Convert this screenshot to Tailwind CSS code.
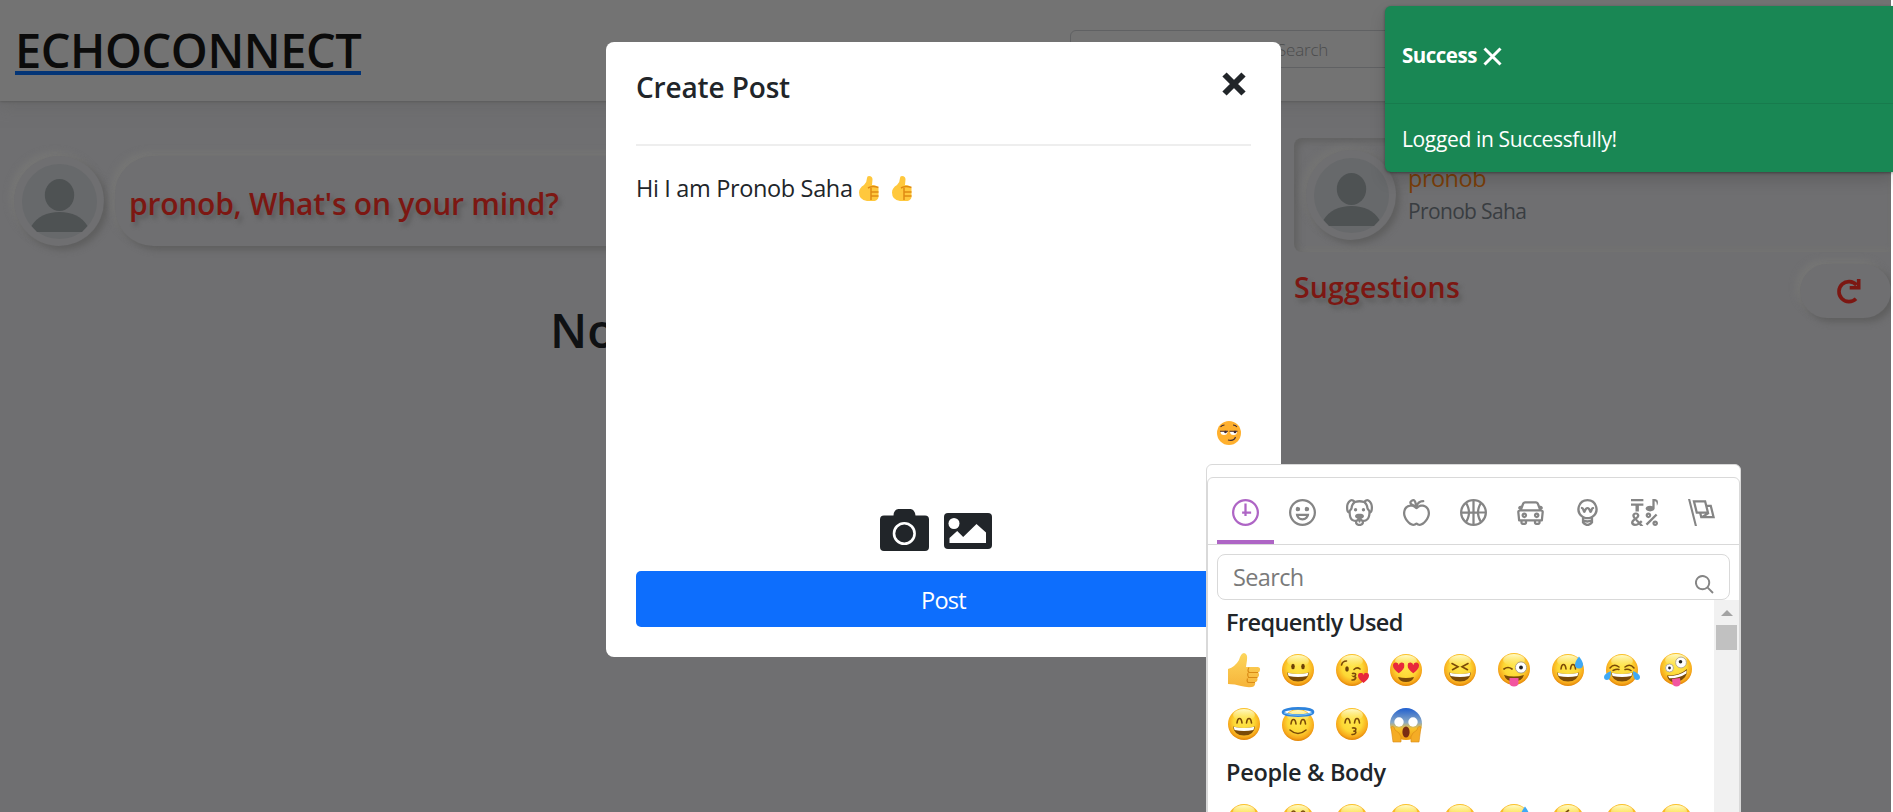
<!DOCTYPE html>
<html lang="en">
<head>
<meta charset="utf-8">
<title>EchoConnect</title>
<script src="https://cdn.jsdelivr.net/npm/@tailwindcss/browser@4"></script>
</head>
<body class="relative h-[812px] w-[1893px] overflow-hidden bg-white font-['Open_Sans','Noto_Sans',sans-serif] text-[#212529]">

<!-- shared shapes -->
<svg class="absolute size-0">
  <defs>
    <radialGradient id="face" cx=".5" cy=".42" r=".58">
      <stop offset="0" stop-color="#ffe64a"/><stop offset=".55" stop-color="#fdd835"/><stop offset=".85" stop-color="#f7a91c"/><stop offset="1" stop-color="#e08305"/>
    </radialGradient>
    <linearGradient id="shine" x1="0" y1="0" x2="0" y2="1"><stop offset="0" stop-color="#fffbc8"/><stop offset="1" stop-color="#fff59d" stop-opacity="0"/></linearGradient>
    <linearGradient id="scare" x1="0" y1="0" x2="0" y2="1"><stop offset="0" stop-color="#1f5fd0"/><stop offset=".45" stop-color="#8aa9c4"/><stop offset=".65" stop-color="#f9c22b"/><stop offset="1" stop-color="#ee9a10"/></linearGradient>
    <linearGradient id="thumb" x1="0" y1="0" x2="0" y2="1"><stop offset="0" stop-color="#fdd65c"/><stop offset="1" stop-color="#f6b43a"/></linearGradient>
    <symbol id="ball" viewBox="0 0 34 34"><circle cx="17" cy="17" r="16" fill="url(#face)"/><ellipse cx="17" cy="8" rx="11" ry="6" fill="url(#shine)"/></symbol>
    <symbol id="grin" viewBox="0 0 34 34"><path d="M6 19.5q11 3 22 0q-1 9-11 9t-11-9z" fill="#7a4a08"/><path d="M6.6 19.7q10.400 2.500 20.800 0l-1 3.300q-9.400 1.800-18.800 0z" fill="#fff"/></symbol>
    <symbol id="arcs" viewBox="0 0 34 34"><path d="M10 16q.5-4.500 2.500-4.500t2.500 4.500M19.500 16q.5-4.500 2.500-4.500t2.500 4.500" fill="none" stroke="#7a4a08" stroke-width="1.600" stroke-linecap="round"/></symbol>
    <symbol id="heart" viewBox="0 0 12 11"><path d="M6 11Q0 6.500 0 3.200A3 3 0 0 1 6 2.500A3 3 0 0 1 12 3.200Q12 6.500 6 11z" fill="#e8293b"/></symbol>
    <symbol id="drop" viewBox="0 0 8 12"><path d="M4 0Q8 5 8 8a4 4 0 0 1-8 0Q0 5 4 0z" fill="#3fa9f5"/></symbol>

    <symbol id="e-thumb" viewBox="0 0 34 36"><path d="M1 17q7-2 11-9Q14 1 17 1q4 1 3 7l-1 7h12q2.500.5 2 3t-2 2.500q1.500 1 1 3t-2 2q1 1.500.3 3t-2.300 1.700q.6 1.600-.3 3T25 35q-6 .5-11-1Q8 32 1 32z" fill="url(#thumb)"/><path d="M31 20.500h-9q-2-2 0-5M30.500 25.500h-9q-1.500-2-.5-4.500M28 30.500h-7q-1.500-2-.5-4" fill="none" stroke="#d98a16" stroke-width="1.200"/></symbol>
    <symbol id="e-grin" viewBox="0 0 34 34"><use href="#ball"/><ellipse cx="12" cy="13.500" rx="1.800" ry="2.700" fill="#6b4008"/><ellipse cx="22" cy="13.500" rx="1.800" ry="2.700" fill="#6b4008"/><use href="#grin"/></symbol>
    <symbol id="e-kissheart" viewBox="0 0 34 34"><use href="#ball"/><ellipse cx="12" cy="16" rx="1.800" ry="2.800" fill="#6b4008"/><path d="M6.500 12q1-4 5-4M19 16.500q3-3 6-.5M17.500 20.500q4-.5 3 1.700t-2 1.300q3 .3 2 2t-3.500 1.500" fill="none" stroke="#7a4a08" stroke-width="1.600" stroke-linecap="round"/><use href="#heart" x="23" y="20" width="11" height="10"/></symbol>
    <symbol id="e-hearteyes" viewBox="0 0 34 34"><use href="#ball"/><use href="#heart" x="4" y="9" width="11.500" height="12"/><use href="#heart" x="18.500" y="9" width="11.500" height="12"/><path d="M9 24q8 2 16 0-1.500 5-8 5t-8-5z" fill="#7a4a08"/></symbol>
    <symbol id="e-squint" viewBox="0 0 34 34"><use href="#ball"/><path d="M9 10.500l6 3.200-5.500 3M25 10.500l-6 3.200 5.500 3" fill="none" stroke="#7a4a08" stroke-width="1.600" stroke-linecap="round"/><use href="#grin"/></symbol>
    <symbol id="e-wink" viewBox="0 0 34 36"><use href="#ball" width="34" height="34"/><path d="M7 17q4-3 8 0" fill="none" stroke="#7a4a08" stroke-width="1.700" stroke-linecap="round"/><circle cx="24" cy="15.500" r="5.600" fill="#fff" stroke="#9a8f80" stroke-width=".8"/><circle cx="24" cy="15.500" r="1.900" fill="#222"/><path d="M7 23q10 3 20 0-2 6.500-10 6.500T7 23z" fill="#7a4a08"/><path d="M12.500 26h9v5q-.5 3.500-4.500 3.500t-4.500-3.500z" fill="#f255a0"/></symbol>
    <symbol id="e-sweat" viewBox="0 0 34 34"><use href="#ball"/><use href="#arcs"/><use href="#grin"/><use href="#drop" x="24" y="3" width="8" height="13"/></symbol>
    <symbol id="e-joy" viewBox="0 0 36 34"><use href="#ball" x="1" width="34" height="34"/><path d="M6 15q4-5 9-1M21 14q5-4 9 1M9 17.500q4-2 6-1M21 16.500q3-1 6 1" fill="none" stroke="#7a4a08" stroke-width="1.500" stroke-linecap="round"/><use href="#grin" x="1" width="34" height="34"/><path d="M7 18q0 9-4 9a3 3 0 0 1-3-3q0-3 7-6zM29 18q0 9 4 9a3 3 0 0 0 3-3q0-3-7-6z" fill="#3fa9f5"/></symbol>
    <symbol id="e-zany" viewBox="0 0 34 36"><use href="#ball" width="34" height="34"/><circle cx="22" cy="10.500" r="5.400" fill="#fff" stroke="#a99c86" stroke-width=".8"/><circle cx="21.500" cy="9.800" r="1.800" fill="#222"/><circle cx="10.500" cy="16" r="4" fill="#fff" stroke="#a99c86" stroke-width=".8"/><circle cx="10.500" cy="16" r="1.400" fill="#222"/><path d="M8 23.500q12 .5 20-6.500.5 10-9 12.500T8 23.500z" fill="#7a4a08"/><path d="M9 24q11 0 18.600-5.500l-.3 3q-7.300 5-17 4.700z" fill="#fff"/><path d="M13 27l8-1 .5 5q-.5 3.500-4 3.500t-4-3z" fill="#f255a0"/></symbol>
    <symbol id="e-smile" viewBox="0 0 34 34"><use href="#ball"/><use href="#arcs"/><use href="#grin"/></symbol>
    <symbol id="e-halo" viewBox="0 0 34 36"><use href="#ball" y="2" width="34" height="34"/><ellipse cx="17" cy="6" rx="15" ry="3.600" fill="none" stroke="#2d83dd" stroke-width="2.600"/><path d="M3 7q14 4.500 28 0" fill="none" stroke="#7ec4f5" stroke-width="1.200"/><path d="M10 18q.5-4.500 2.500-4.500t2.500 4.500M19.500 18q.5-4.500 2.500-4.500t2.500 4.500M9 24q8 7 16 0" fill="none" stroke="#7a4a08" stroke-width="1.600" stroke-linecap="round"/></symbol>
    <symbol id="e-kiss" viewBox="0 0 34 34"><use href="#ball"/><use href="#arcs"/><path d="M17.500 21q4-.5 3.300 1.700t-2.300 1.300q3 .3 2.200 2T17 27.500" fill="none" stroke="#7a4a08" stroke-width="1.600" stroke-linecap="round"/></symbol>
    <symbol id="e-scream" viewBox="0 0 34 36"><circle cx="17" cy="17" r="16" fill="url(#scare)"/><circle cx="10" cy="15" r="4.700" fill="#fff"/><circle cx="24" cy="15" r="4.700" fill="#fff"/><ellipse cx="17" cy="25" rx="3.600" ry="5.500" fill="#7a2c12"/><path d="M2 20q3-2 4 3l4 3q3 3 2 9H4q-1-7-2-15zM32 20q-3-2-4 3l-4 3q-3 3-2 9h8q1-7 2-15z" fill="#f5ac25" stroke="#d98a16" stroke-width=".6"/></symbol>
    <symbol id="e-flatthumb" viewBox="0 0 20 25"><path d="M10 0q3.500 0 3.500 3.500L13 9q6 0 6.500 3.500V21q-.5 3-4 4H8Q0 24 0 16.500 0 12 5 9 8 6 8 2q0-2 2-2z" fill="#ffc83d"/><path d="M9 12q4-2.500 10.500-.5M12 11.800V24M12.500 16h7M12.500 20h7" fill="none" stroke="#e08b13" stroke-width="1.500"/></symbol>
    <symbol id="avatar" viewBox="0 0 75 75"><circle cx="37.500" cy="37.500" r="37.500" fill="#67696b"/><ellipse cx="37.500" cy="31" rx="14.700" ry="16" fill="#4e5253"/><path d="M9.500 62Q18 48 37.500 48T65.500 62L60 68H15z" fill="#4e5253"/></symbol>
  </defs>
</svg>

<!-- dimmed page -->
<div class="flex h-full w-[1891px] flex-col overflow-hidden bg-[#6f6f71]">
  <header class="flex h-[101px] shrink-0 justify-between bg-[#737373] pl-[15px] shadow-[0_1px_2px_#5c5c5c,0_6px_14px_#65656599]">
    <a class="mt-[20px] h-[55px] w-[346px] border-b-4 border-[#033577] text-[47px] leading-[60px] font-semibold tracking-[-0.450px] whitespace-nowrap text-[#0b0b0b]">ECHOCONNECT</a>
    <div class="mt-[30px] mr-[321px] flex h-[38px] w-[500px] rounded-md border border-[#606163] pl-[206px]">
      <span class="text-[17px] leading-[37px] font-light tracking-[-0.2px] text-[#4b4c4d]">Search</span>
    </div>
  </header>
  <main class="flex flex-1 justify-between">
    <section class="w-[1270px] pt-[55px] pl-[14px]">
      <div class="flex gap-[11px]">
        <div class="flex size-[90px] items-center justify-center rounded-full shadow-[4px_4px_6px_#5f5f5f,-4px_-4px_6px_#767675]"><svg class="size-[75px]"><use href="#avatar"/></svg></div>
        <div class="h-[90px] flex-1 rounded-[38px] pl-[14px] shadow-[4px_4px_6px_#5f5f5f,-4px_-4px_6px_#767675]">
          <p class="text-[30px] leading-[95px] font-semibold tracking-[-0.230px] whitespace-nowrap text-[#7c1712] [text-shadow:3px_4px_4px_#5c5c5c]">pronob, What's on your mind?</p>
        </div>
      </div>
      <h1 class="mt-[54px] pl-[536px] text-[47.500px] leading-[60px] font-semibold text-[#0f1113]">No</h1>
    </section>
    <aside class="w-[597px] pt-[37px]">
      <div class="flex h-[114px] items-center gap-[12px] rounded-l-lg pl-[12px] shadow-[inset_4px_4px_6px_#626262,inset_0_-3px_5px_#747473]">
        <div class="flex size-[90px] items-center justify-center rounded-full shadow-[4px_4px_6px_#5f5f5f,-4px_-4px_6px_#747473]"><svg class="size-[75px]"><use href="#avatar"/></svg></div>
        <div>
          <p class="text-[23.500px] leading-[33px] tracking-[-0.5px] text-[#7a3e09]">pronob</p>
          <p class="text-[21px] leading-[33px] tracking-[-0.65px] text-[#393d41]">Pronob Saha</p>
        </div>
      </div>
      <div class="flex justify-between pt-[12px]">
        <h2 class="text-[28.500px] leading-[46px] font-semibold tracking-[0.15px] text-[#7c1712] [text-shadow:3px_4px_4px_#5c5c5c]">Suggestions</h2>
        <div class="flex h-[54px] w-[91px] items-center rounded-[27px] pl-[36px] shadow-[4px_4px_6px_#5f5f5f,-4px_-4px_6px_#767675]">
          <svg class="size-[26px]" viewBox="0 0 26 26" fill="none" stroke="#7c1712" stroke-width="3.600"><path d="M20 20.700A10 10 0 1 1 20.500 7"/><path d="M22.700 1v8.700h-9" /></svg>
        </div>
      </div>
    </aside>
  </main>
</div>

<!-- create post dialog -->
<div class="absolute top-[42px] left-[606px] flex h-[615px] w-[675px] flex-col rounded-lg bg-white px-[30px]">
  <div class="flex h-[104px] justify-between border-b-2 border-[#eee] pt-[26px] pr-[5px]">
    <h3 class="text-[28px] leading-[39px] font-semibold tracking-[-0.15px]">Create Post</h3>
    <svg class="mt-[4px] size-[24px]" viewBox="0 0 24 24"><path d="M2.500 2.500l19 19M21.500 2.500l-19 19" stroke="#212529" stroke-width="6"/></svg>
  </div>
  <div class="flex pt-[25px]">
    <p class="w-[223px] text-[23.500px] leading-[34px] tracking-[-0.350px] whitespace-nowrap">Hi I am Pronob Saha</p>
    <svg class="mt-[5px] h-[25px] w-[20px]"><use href="#e-flatthumb"/></svg>
    <svg class="mt-[5px] ml-[13px] h-[25px] w-[20px]"><use href="#e-flatthumb"/></svg>
  </div>
  <div class="mt-[216px] flex justify-end pr-[10px]">
    <svg class="size-[24px]" viewBox="0 0 24 24"><circle cx="12" cy="12" r="12" fill="#ffb02e"/><path d="M3.500 10.500h7q0 3.500-3.500 3.500t-3.500-3.500zM13 10.500h7q0 3.500-3.500 3.500t-3.500-3.500z" fill="#fff"/><path d="M3 10.200h8M12.500 10.200h8M3.500 6q1.500-2 4-2M16 4q2.500 0 4 2M11 19q6 1.500 7.500-3" fill="none" stroke="#402a32" stroke-width="1.100"/><circle cx="8.500" cy="11" r="1.300" fill="#402a32"/><circle cx="18" cy="11" r="1.300" fill="#402a32"/></svg>
  </div>
  <div class="mt-[64px] flex h-[43px] items-center justify-center gap-[15px] pr-[15px]">
    <svg class="h-[43px] w-[49px]" viewBox="0 0 49 43"><path d="M4 6.500h9.500q.5-6.500 5-6.500h12q4 0 5 6.500H45q4 0 4 4V38q0 4-4 4H4q-4 0-4-4V10.500q0-4 4-4z" fill="#212529"/><circle cx="24.300" cy="24.500" r="10.300" fill="none" stroke="#fff" stroke-width="2.600"/></svg>
    <svg class="h-[36px] w-[48px]" viewBox="0 0 48 36"><rect width="48" height="36" rx="4" fill="#212529"/><circle cx="10" cy="10.500" r="5.500" fill="#fff"/><path d="M5.500 30v-5l7.700-7 6 6L32.500 11l9.500 8.500V30z" fill="#fff"/></svg>
  </div>
  <button class="mt-[19px] h-[56px] rounded-[5px] bg-[#0d6efd] text-[23.500px] leading-[58px] tracking-[-0.7px] text-white">Post</button>
</div>

<!-- toast -->
<div class="absolute top-[6px] left-[1385px] h-[166px] w-[508px] rounded-l-md bg-[#198754] text-white shadow-[0_8px_16px_#00000026,0_1px_3px_#00000060]">
  <div class="flex h-[98px] items-center gap-[5px] border-b border-[#177b4d] pl-[17px]">
    <span class="w-[76px] text-[20.500px] leading-[30px] font-bold tracking-[-0.5px]">Success</span>
    <svg class="mt-[4px] size-[19px]" viewBox="0 0 19 19"><path d="M1.500 1.500l16 16M17.500 1.500l-16 16" stroke="#fff" stroke-width="3"/></svg>
  </div>
  <p class="pt-[18px] pl-[17px] text-[21px] leading-[34px] tracking-[-0.36px]">Logged in Successfully!</p>
</div>

<!-- emoji picker -->
<div class="absolute top-[464px] left-[1206px] h-[360px] w-[535px] rounded-md border border-[#d9d9d9] bg-white pt-[12px]">
  <div class="flex h-[350px] w-[533px] flex-col rounded-t-md border border-[#d9d9d9] bg-white">
    <nav class="flex h-[67px] shrink-0 border-b border-[#d9d9d9] px-[9px] text-[#858585]">
      <span class="flex w-[57px] items-center justify-center border-b-4 border-[#ae65c5] pt-[7px] text-[#ae65c5]"><svg class="size-[27px]" viewBox="0 0 24 24" fill="currentColor"><path d="M13 4h-2l-.001 7H9v2h2v2h2v-2h4v-2h-4z"/><path d="M12 0C5.373 0 0 5.373 0 12s5.373 12 12 12 12-5.373 12-12S18.627 0 12 0m0 22C6.486 22 2 17.514 2 12S6.486 2 12 2s10 4.486 10 10-4.486 10-10 10"/></svg></span>
      <span class="flex w-[57px] items-center justify-center pt-[3px]"><svg class="size-[27px]" viewBox="0 0 24 24" fill="currentColor"><path d="M12 0C5.373 0 0 5.373 0 12s5.373 12 12 12 12-5.373 12-12S18.627 0 12 0m0 22C6.486 22 2 17.514 2 12S6.486 2 12 2s10 4.486 10 10-4.486 10-10 10"/><path d="M8 7a2 2 0 1 0-.001 3.999A2 2 0 0 0 8 7M16 7a2 2 0 1 0-.001 3.999A2 2 0 0 0 16 7M15.232 15c-.693 1.195-1.870 2-3.349 2-1.477 0-2.655-.805-3.347-2H15m3-2H6a6 6 0 1 0 12 0"/></svg></span>
      <span class="flex w-[57px] items-center justify-center pt-[3px]"><svg class="size-[27px]" viewBox="0 0 24 24" fill="currentColor"><path d="M15.5 8a1.5 1.5 0 1 0 .001 3.001A1.5 1.5 0 0 0 15.5 8M8.5 8a1.5 1.5 0 1 0 .001 3.001A1.5 1.5 0 0 0 8.5 8"/><path d="M18.933 0h-.027c-.97 0-2.138.787-3.018 1.497-1.274-.374-2.612-.51-3.887-.51-1.285 0-2.616.133-3.874.517C7.245.79 6.069 0 5.093 0h-.027C3.352 0 .07 2.67.002 7.026c-.039 2.479.276 4.238 1.04 5.013.254.258.882.677 1.295.882.191 3.177.922 5.238 2.536 6.38.897.637 2.187.949 3.2 1.102C8.04 20.6 8 20.795 8 21c0 1.773 2.35 3 4 3 1.648 0 4-1.227 4-3 0-.201-.038-.393-.072-.586 2.573-.385 5.435-1.877 5.925-7.587.396-.22.887-.568 1.104-.788.763-.774 1.079-2.534 1.04-5.013C23.929 2.67 20.646 0 18.933 0M3.223 9.135c-.237.281-.837 1.155-.884 1.238-.15-.41-.368-1.349-.337-3.291.051-3.281 2.478-4.972 3.091-5.031.256.015.731.27 1.265.646-1.11 1.171-2.275 2.915-2.352 5.125-.133.546-.398.858-.783 1.313M12 22c-.901 0-1.954-.693-2-1 0-.654.475-1.236 1-1.602V20a1 1 0 1 0 2 0v-.602c.524.365 1 .947 1 1.602-.046.307-1.099 1-2 1m3-3.48v.02a4.752 4.752 0 0 0-1.262-1.02c1.092-.516 2.239-1.334 2.239-2.217 0-1.842-1.781-2.195-3.977-2.195-2.196 0-3.978.354-3.978 2.195 0 .883 1.148 1.701 2.238 2.217A4.8 4.8 0 0 0 9 18.539v-.025c-1-.076-2.182-.281-2.973-.842-1.301-.92-1.838-3.045-1.853-6.478l.023-.041c.496-.826 1.49-1.45 1.804-3.102 0-2.047 1.357-3.631 2.362-4.522C9.37 3.178 10.555 3 11.948 3c1.447 0 2.685.192 3.733.57 1 .9 2.316 2.465 2.316 4.48.313 1.651 1.307 2.275 1.803 3.102.035.058.068.117.102.178-.059 5.967-1.949 7.01-4.902 7.19m6.628-8.202c-.037-.065-.074-.13-.113-.195a7.587 7.587 0 0 0-.739-.987c-.385-.455-.648-.768-.782-1.313-.076-2.209-1.241-3.954-2.353-5.124.531-.376 1.004-.63 1.261-.647.636.071 3.044 1.764 3.096 5.031.027 1.81-.347 3.218-.37 3.235"/></svg></span>
      <span class="flex w-[57px] items-center justify-center pt-[3px]"><svg class="size-[27px]" viewBox="0 0 24 24" fill="currentColor"><path d="M17 4.978c-1.838 0-2.876.396-3.68.934.513-1.172 1.768-2.934 4.68-2.934a1 1 0 1 0 0-2c-2.921 0-4.629 1.365-5.547 2.512-.064.078-.119.162-.18.244C11.73 1.838 10.798.023 9.207.023 8.579.022 7.85.306 7 .978 5.027 2.54 5.329 3.902 6.492 4.999 3.609 5.222 0 7.352 0 12.969c0 4.582 4.961 11.009 9 11.009 1.975 0 2.371-.486 3-1 .629.514 1.025 1 3 1 4.039 0 9-6.418 9-11 0-5.953-4.055-8-7-8M8.242 2.546c.641-.508.943-.523.965-.523.426.169.975 1.405 1.357 3.055-1.527-.629-2.741-1.352-2.98-1.846.059-.112.241-.356.658-.686M15 21.978c-1.08 0-1.21-.109-1.559-.402l-.176-.146c-.367-.302-.816-.452-1.266-.452s-.898.15-1.266.452l-.176.146c-.347.292-.477.402-1.557.402-2.813 0-7-5.389-7-9.009 0-5.823 4.488-5.991 5-5.991 1.939 0 2.484.471 3.387 1.251l.323.276a1.995 1.995 0 0 0 2.58 0l.323-.276c.902-.78 1.447-1.251 3.387-1.251.512 0 5 .168 5 6 0 3.617-4.187 9-7 9"/></svg></span>
      <span class="flex w-[57px] items-center justify-center pt-[3px]"><svg class="size-[27px]" viewBox="0 0 24 24" fill="currentColor"><path d="M12 0C5.373 0 0 5.372 0 12c0 6.627 5.373 12 12 12 6.628 0 12-5.373 12-12 0-6.628-5.372-12-12-12m9.949 11H17.05c.224-2.527 1.232-4.773 1.968-6.113A9.966 9.966 0 0 1 21.949 11M13 11V2.051a9.945 9.945 0 0 1 4.432 1.564c-.858 1.491-2.156 4.22-2.392 7.385H13zm-2 0H8.961c-.238-3.165-1.536-5.894-2.393-7.385A9.95 9.95 0 0 1 11 2.051V11zm0 2v8.949a9.937 9.937 0 0 1-4.432-1.564c.857-1.492 2.155-4.221 2.393-7.385H11zm4.04 0c.236 3.164 1.534 5.893 2.392 7.385A9.92 9.92 0 0 1 13 21.949V13h2.04zM4.982 4.887C5.718 6.227 6.726 8.473 6.951 11h-4.9a9.977 9.977 0 0 1 2.931-6.113M2.051 13h4.9c-.226 2.527-1.233 4.771-1.969 6.113A9.972 9.972 0 0 1 2.051 13m16.967 6.113c-.735-1.342-1.744-3.586-1.968-6.113h4.899a9.961 9.961 0 0 1-2.931 6.113"/></svg></span>
      <span class="flex w-[57px] items-center justify-center pt-[3px]"><svg class="size-[27px]" viewBox="0 0 24 24" fill="currentColor"><path d="M6.5 12C5.122 12 4 13.121 4 14.5S5.122 17 6.5 17 9 15.879 9 14.5 7.878 12 6.5 12m0 3c-.275 0-.5-.225-.5-.5s.225-.5.5-.5.5.225.5.5-.225.5-.5.5M17.5 12c-1.378 0-2.5 1.121-2.5 2.5s1.122 2.5 2.5 2.5 2.5-1.121 2.5-2.5-1.122-2.5-2.5-2.5m0 3c-.275 0-.5-.225-.5-.5s.225-.5.5-.5.5.225.5.5-.225.5-.5.5"/><path d="M22.482 9.494l-1.039-.346L21.4 9h.6c.552 0 1-.439 1-.992 0-.006-.003-.008-.003-.008H23c0-1-.889-2-1.984-2h-.642l-.731-1.717C19.262 3.012 18.091 2 16.764 2H7.236C5.909 2 4.738 3.012 4.357 4.283L3.626 6h-.642C1.889 6 1 7 1 8h.003S1 8.002 1 8.008C1 8.561 1.448 9 2 9h.6l-.043.148-1.039.346a2.001 2.001 0 0 0-1.359 2.097l.751 7.508a1 1 0 0 0 .994.901H3v1c0 1.103.896 2 2 2h2c1.104 0 2-.897 2-2v-1h6v1c0 1.103.896 2 2 2h2c1.104 0 2-.897 2-2v-1h1.096a.999.999 0 0 0 .994-.901l.751-7.508a2.001 2.001 0 0 0-1.359-2.097M6.273 4.857C6.402 4.43 6.788 4 7.236 4h9.527c.448 0 .834.43.963.857L19.313 9H4.688l1.585-4.143zM7 21H5v-1h2v1zm12 0h-2v-1h2v1zm2.189-3H2.811l-.662-6.607L3 11h18l.852.393L21.189 18z"/></svg></span>
      <span class="flex w-[57px] items-center justify-center pt-[3px]"><svg class="size-[27px]" viewBox="0 0 24 24" fill="currentColor"><path d="M12 0a9 9 0 0 0-5 16.482V21s2.035 3 5 3 5-3 5-3v-4.518A9 9 0 0 0 12 0zm0 2c3.860 0 7 3.141 7 7s-3.140 7-7 7-7-3.141-7-7 3.140-7 7-7zM9 17.477c.94.332 1.946.523 3 .523s2.060-.19 3-.523v.834c-.91.436-1.925.689-3 .689a6.924 6.924 0 0 1-3-.69v-.833zm.236 3.070A8.854 8.854 0 0 0 12 21c.965 0 1.888-.167 2.758-.451C14.155 21.173 13.153 22 12 22c-1.102 0-2.117-.789-2.764-1.453z"/><path d="M14.745 12.449h-.004c-.852-.024-1.188-.858-1.577-1.824-.421-1.061-.703-1.561-1.182-1.566h-.009c-.481 0-.783.497-1.235 1.537-.436.982-.801 1.811-1.636 1.791l-.276-.043c-.565-.171-.853-.691-1.284-1.794-.125-.313-.202-.632-.27-.913-.051-.213-.127-.53-.195-.634C7.067 9.004 7.039 9 6.990 9A1 1 0 0 1 7 7h.01c1.662.017 2.015 1.373 2.198 2.134.486-.981 1.304-2.058 2.797-2.075 1.531.018 2.280 1.153 2.731 2.141l.002-.008C14.944 8.424 15.327 7 16.979 7h.032A1 1 0 1 1 17 9h-.011c-.149.076-.256.474-.319.709a6.484 6.484 0 0 1-.311.951c-.429.973-.79 1.789-1.614 1.789"/></svg></span>
      <span class="flex w-[57px] items-center justify-center pt-[3px]"><svg class="size-[27px]" viewBox="0 0 24 24" fill="currentColor"><path d="M0 0h11v2H0zM4 11h3V6h4V4H0v2h4zM15.5 17c1.381 0 2.5-1.116 2.5-2.493s-1.119-2.493-2.5-2.493S13 13.13 13 14.507 14.119 17 15.5 17m0-2.986c.276 0 .5.222.5.493 0 .272-.224.493-.5.493s-.5-.221-.5-.493.224-.493.5-.493M21.5 19.014c-1.381 0-2.5 1.116-2.5 2.493S20.119 24 21.5 24s2.5-1.116 2.5-2.493-1.119-2.493-2.5-2.493m0 2.986a.497.497 0 0 1-.5-.493c0-.271.224-.493.5-.493s.5.222.5.493a.497.497 0 0 1-.5.493M22 13l-9 9 1.513 1.5 8.99-9.009zM17 11c2.209 0 4-1.119 4-2.5V2s.985-.161 1.498.949C23.01 4.055 23 6 23 6s1-1.119 1-3.135C24-.02 21 0 21 0h-2v6.347A5.853 5.853 0 0 0 17 6c-2.209 0-4 1.119-4 2.5s1.791 2.5 4 2.5M10.297 20.482l-1.475-1.585a47.54 47.54 0 0 1-1.442 1.129c-.307-.288-.989-1.016-2.045-2.183.902-.836 1.479-1.466 1.729-1.892s.376-.871.376-1.336c0-.592-.273-1.178-.818-1.759-.546-.581-1.329-.871-2.349-.871-1.008 0-1.79.293-2.344.879-.556.587-.832 1.181-.832 1.784 0 .813.419 1.748 1.256 2.805-.847.614-1.444 1.208-1.794 1.784a3.465 3.465 0 0 0-.523 1.833c0 .857.308 1.56.924 2.107.616.549 1.423.823 2.42.823 1.173 0 2.444-.379 3.813-1.137L8.235 24h2.819l-2.09-2.383 1.333-1.135zm-6.736-6.389a1.02 1.02 0 0 1 .73-.286c.31 0 .559.085.747.254a.849.849 0 0 1 .283.659c0 .518-.419 1.112-1.257 1.784-.536-.651-.805-1.231-.805-1.742a.901.901 0 0 1 .302-.669M3.74 22c-.427 0-.778-.116-1.057-.349-.279-.232-.418-.487-.418-.766 0-.594.509-1.288 1.527-2.083.968 1.134 1.717 1.946 2.248 2.438-.921.507-1.686.76-2.3.76"/></svg></span>
      <span class="flex w-[57px] items-center justify-center pt-[3px]"><svg class="size-[27px]" viewBox="0 0 24 24" fill="currentColor"><path d="M0 0l6.084 24H8L1.916 0zM21 5h-4l-1-4H4l3 12h3l1 4h13L21 5zM6.563 3h7.875l2 8H8.563l-2-8zm8.832 10l-2.856 1.904L12.063 13h3.332zM19 13l-1.5-6h1.938l2 8H16l3-2z"/></svg></span>
    </nav>
    <div class="mx-[9px] mt-[9px] flex h-[46px] w-[513px] shrink-0 justify-between rounded-lg border border-[#d9d9d9] pr-[15px] pl-[15px]">
      <span class="text-[23.500px] leading-[45px] tracking-[-0.65px] text-[#7a7a7a]">Search</span>
      <svg class="mt-[20px] size-[19px]" viewBox="0 0 20 20" fill="#858585"><path d="M12.900 14.320a8 8 0 1 1 1.410-1.410l5.350 5.330-1.420 1.420-5.330-5.340zM8 14A6 6 0 1 0 8 2a6 6 0 0 0 0 12z"/></svg>
    </div>
    <div class="flex flex-1 justify-between">
      <div class="w-[500px] pl-[19px]">
        <h4 class="-ml-px h-[51px] text-[23.500px] leading-[44px] font-semibold tracking-[-0.6px]">Frequently Used</h4>
        <div class="grid grid-cols-[repeat(9,54px)] grid-rows-[54px_54px]">
          <svg class="mt-px h-[36px] w-[34px]"><use href="#e-thumb"/></svg>
          <svg class="mt-[2px] size-[34px]"><use href="#e-grin"/></svg>
          <svg class="mt-[2px] size-[34px]"><use href="#e-kissheart"/></svg>
          <svg class="mt-[2px] size-[34px]"><use href="#e-hearteyes"/></svg>
          <svg class="mt-[2px] size-[34px]"><use href="#e-squint"/></svg>
          <svg class="mt-[1px] h-[36px] w-[34px]"><use href="#e-wink"/></svg>
          <svg class="mt-[2px] size-[34px]"><use href="#e-sweat"/></svg>
          <svg class="mt-[2px] -ml-px h-[34px] w-[36px]"><use href="#e-joy"/></svg>
          <svg class="mt-[1px] h-[36px] w-[34px]"><use href="#e-zany"/></svg>
          <svg class="mt-[2px] size-[34px]"><use href="#e-smile"/></svg>
          <svg class="mt-px h-[36px] w-[34px]"><use href="#e-halo"/></svg>
          <svg class="mt-[2px] size-[34px]"><use href="#e-kiss"/></svg>
          <svg class="mt-[2px] h-[36px] w-[34px]"><use href="#e-scream"/></svg>
        </div>
        <h4 class="-ml-px h-[44px] text-[23.500px] leading-[26px] font-semibold tracking-[-0.3px]">People &amp; Body</h4>
        <div class="grid grid-cols-[repeat(9,54px)]">
          <svg class="size-[34px]"><use href="#e-grin"/></svg>
          <svg class="size-[34px]" viewBox="0 0 34 34"><use href="#ball"/><path d="M10 12.500q.5-4.500 2.500-4.500t2.500 4.500M19.500 12.500q.5-4.500 2.500-4.500t2.500 4.500" fill="none" stroke="#7a4a08" stroke-width="1.600"/></svg>
          <svg class="size-[34px]"><use href="#e-smile"/></svg>
          <svg class="size-[34px]"><use href="#e-smile"/></svg>
          <svg class="size-[34px]"><use href="#e-squint"/></svg>
          <svg class="size-[34px]"><use href="#e-sweat"/></svg>
          <svg class="size-[34px]" viewBox="0 0 34 34"><use href="#ball"/><path d="M14 10l4-3" stroke="#7a4a08" stroke-width="1.600"/></svg>
          <svg class="size-[34px]"><use href="#e-smile"/></svg>
          <svg class="size-[34px]"><use href="#e-smile"/></svg>
        </div>
      </div>
      <div class="flex w-[25px] flex-col items-center bg-[#f1f1f1]">
        <svg class="mt-[10px] h-[6px] w-[12px]" viewBox="0 0 12 6"><path d="M6 0l6 6H0z" fill="#a3a3a3"/></svg>
        <div class="mt-[9px] h-[25px] w-[21px] bg-[#c1c1c1]"></div>
      </div>
    </div>
  </div>
</div>
</body>
</html>
